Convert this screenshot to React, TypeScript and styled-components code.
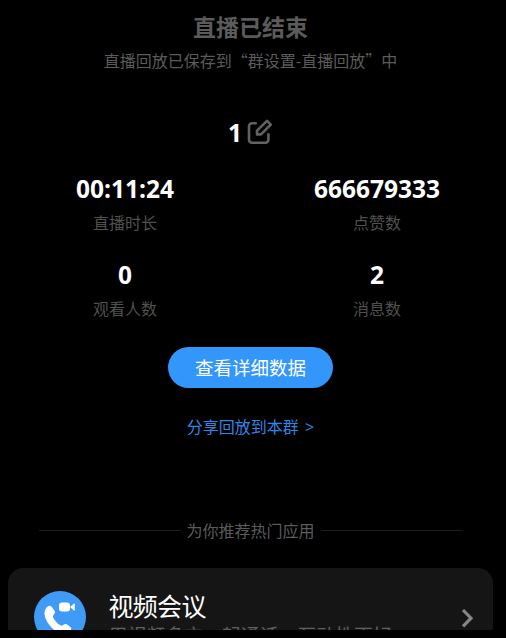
import React from "react";
import styled, { createGlobalStyle } from "styled-components";

const GlobalStyle = createGlobalStyle`
  * { box-sizing: border-box; }
  body {
    margin: 0;
    background: #000;
    font-family: "Noto Sans CJK SC", sans-serif;
  }
`;

const Page = styled.main`
  display: flex;
  flex-direction: column;
  align-items: center;
  width: 501px;
  height: 630px;
  overflow: hidden;
  background: #000;
`;

const Title = styled.h1`
  margin: 9px 0 0;
  font-size: 23px;
  line-height: 34px;
  font-weight: 700;
  color: #5b5b5b;
`;

const Subtitle = styled.p`
  margin: 5px 0 0;
  font-size: 16px;
  line-height: 24px;
  color: #5b5b5b;
  white-space: nowrap;
`;

const NameRow = styled.div`
  display: flex;
  align-items: center;
  gap: 5px;
  height: 34px;
  margin-top: 44px;
`;

const Value = styled.strong`
  font-family: "Open Sans", sans-serif;
  font-size: 24.5px;
  line-height: 34px;
  font-weight: 700;
  color: #fff;
`;

const Stats = styled.section`
  display: grid;
  grid-template-columns: 252px 252px;
  justify-content: center;
  row-gap: 18px;
  margin-top: 22px;
  padding-left: 1px;
`;

const Stat = styled.div`
  display: flex;
  flex-direction: column;
  align-items: center;
  height: 68px;
`;

const Label = styled.span`
  margin-top: 4px;
  font-size: 16px;
  line-height: 24px;
  color: #505050;
`;

const DetailButton = styled.button`
  flex: none;
  width: 165px;
  height: 41px;
  margin-top: 21px;
  padding: 0;
  border: 0;
  border-radius: 21px;
  background: #3296fa;
  color: #fff;
  font: 400 18.5px/41px "Noto Sans CJK SC", sans-serif;
`;

const ShareLink = styled.a`
  margin-top: 26px;
  font-size: 16px;
  line-height: 24px;
  color: #2f86e4;
  white-space: pre;
`;

const Arrow = styled.span`
  margin-left: 2px;
  font-family: "Open Sans", sans-serif;
`;

const Divider = styled.div`
  display: flex;
  align-items: center;
  gap: 6px;
  width: 423px;
  height: 24px;
  margin-top: 79px;
  font-size: 16px;
  line-height: 24px;
  color: #5b5b5b;
  white-space: nowrap;

  &::before,
  &::after {
    content: "";
    flex: 1;
    height: 1px;
    background: #1f1f1f;
  }
`;

const AppCard = styled.article`
  display: flex;
  flex: none;
  align-items: flex-start;
  width: 485px;
  height: 98px;
  margin-top: 26px;
  padding: 23px 17px 0 26px;
  border-radius: 15px;
  background: #151515;
`;

const AppText = styled.div`
  flex: 1;
  margin-left: 22.5px;
  white-space: nowrap;
`;

const AppName = styled.h2`
  margin: -4px 0 0;
  font-size: 25px;
  line-height: 36px;
  font-weight: 400;
  letter-spacing: -0.7px;
  color: #fff;
`;

const AppDescription = styled.p`
  margin: -2px 0 0;
  font-size: 18.9px;
  line-height: 28px;
  color: #606060;
`;

const ChevronSvg = styled.svg`
  flex: none;
  margin-top: 16px;
`;

const EditIcon = () => (
  <svg width="26" height="28" viewBox="0 0 26 28" fill="none" stroke="#626262" strokeWidth="2.6">
    <path d="M9.8 4.2H5a3 3 0 0 0-3 3v13.6a3 3 0 0 0 3 3h13.4a3 3 0 0 0 3-3V14.2" />
    <path d="M20 1.9l3.8 3.7-9.8 9.8h-4v-3.8z" strokeLinejoin="round" />
  </svg>
);

const MeetingIcon = () => (
  <svg width="52" height="52" viewBox="0 0 52 52">
    <circle cx="26" cy="26" r="26" fill="#409bf6" />
    <path
      d="M12 17.2c1.5-2.2 4-3.2 5.4-1.6l3.1 4.2c1 1.5.2 2.8-1 4.1-1.2 1.3-.5 2.7.5 4.1 1.4 2.1 3.2 4.1 5.2 5.6 1.3 1 2.6 1.5 3.9.5 1.3-1 2.6-1.6 4-.6l3.3 2.4c1.7 1.5.7 4-1.4 5.5-5.8 4.2-14.3-.5-19.5-7.2-4.5-5.8-6.7-12.5-3.5-17z"
      fill="#fff"
    />
    <rect x="25" y="11.5" width="11" height="9" rx="3" fill="#fff" />
    <path d="M36 16l3.8-3.3c.5-.4 1-.2 1 .5v5.8c0 .7-.5.9-1 .5z" fill="#fff" />
  </svg>
);

const Chevron = () => (
  <ChevronSvg width="16" height="22" viewBox="0 0 16 22" fill="none" stroke="#868686" strokeWidth="3.2">
    <path d="M3 3l8 8.2-8 8.2" />
  </ChevronSvg>
);

const stats = [
  { value: "00:11:24", label: "直播时长" },
  { value: "666679333", label: "点赞数" },
  { value: "0", label: "观看人数" },
  { value: "2", label: "消息数" },
];

export default function App() {
  return (
    <>
      <GlobalStyle />
      <Page>
        <Title>直播已结束</Title>
        <Subtitle>直播回放已保存到“群设置-直播回放”中</Subtitle>
        <NameRow>
          <Value>1</Value>
          <EditIcon />
        </NameRow>
        <Stats>
          {stats.map((s) => (
            <Stat key={s.label}>
              <Value>{s.value}</Value>
              <Label>{s.label}</Label>
            </Stat>
          ))}
        </Stats>
        <DetailButton>查看详细数据</DetailButton>
        <ShareLink>
          分享回放到本群<Arrow> &gt;</Arrow>
        </ShareLink>
        <Divider>为你推荐热门应用</Divider>
        <AppCard>
          <MeetingIcon />
          <AppText>
            <AppName>视频会议</AppName>
            <AppDescription>用视频多方一起通话，互动性更好</AppDescription>
          </AppText>
          <Chevron />
        </AppCard>
      </Page>
    </>
  );
}
